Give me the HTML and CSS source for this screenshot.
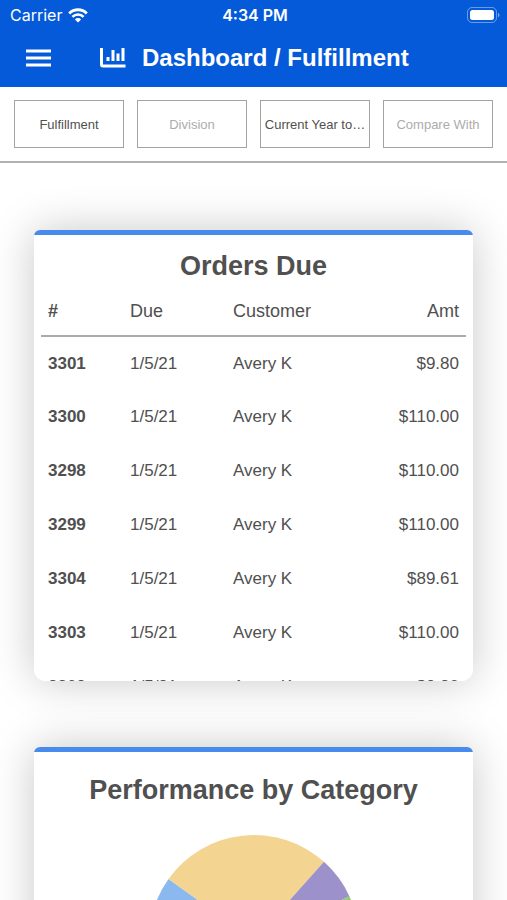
FILE: index.html
```html
<!DOCTYPE html>
<html lang="en">
<head>
<meta charset="utf-8">
<meta name="viewport" content="width=device-width, initial-scale=1">
<title>Dashboard / Fulfillment</title>
<link rel="stylesheet" href="styles.css">
</head>
<body>
<div class="app">
  <header class="header">
    <div class="status">
      <div class="status-carrier">
        <span>Carrier</span>
        <svg class="wifi" viewBox="0 0 20 15" aria-hidden="true">
          <path d="M1.2 5.4a12.4 12.4 0 0 1 17.6 0" fill="none" stroke="#fff" stroke-width="2.8"/>
          <path d="M4.4 8.8a7.9 7.9 0 0 1 11.2 0" fill="none" stroke="#fff" stroke-width="2.6"/>
          <path d="M6.9 11.4a4.4 4.4 0 0 1 6.2 0L10 14.6z" fill="#fff"/>
        </svg>
      </div>
      <span class="status-time">4:34 PM</span>
      <div class="status-battery">
        <svg class="battery" viewBox="0 0 34 16" aria-hidden="true">
          <rect x="1.500" y=".5" width="29" height="15" rx="4.5" fill="none" stroke="#fff" stroke-opacity=".4"/>
          <rect x="4" y="3" width="24" height="10" rx="2.5" fill="#fff"/>
          <path d="M32 5.800c2 .8 2 3.600 0 4.400z" fill="#fff" fill-opacity=".5"/>
        </svg>
      </div>
    </div>
    <div class="bar">
      <button class="menu" type="button" aria-label="Menu">
        <svg class="menu-icon" viewBox="0 0 25 18" aria-hidden="true">
          <path d="M0 2h25M0 9h25M0 16h25" stroke="#fff" stroke-width="3"/>
        </svg>
      </button>
      <svg class="chart-icon" viewBox="0 0 26 20" aria-hidden="true">
        <path d="M1.500 0v16.500q0 1.500 1.500 1.500h22.500" fill="none" stroke="#fff" stroke-width="3"/>
        <path d="M8 13V9M13 13V2M18 13V5.500M23 13V0" stroke="#fff" stroke-width="3"/>
      </svg>
      <h1 class="title">Dashboard / Fulfillment</h1>
    </div>
  </header>

  <nav class="filters" aria-label="Filters">
    <button class="filter" type="button">Fulfillment</button>
    <button class="filter filter-empty" type="button">Division</button>
    <button class="filter" type="button">Current Year to…</button>
    <button class="filter filter-empty" type="button">Compare With</button>
  </nav>

  <main class="content">
    <section class="card card-orders">
      <h2 class="card-title">Orders Due</h2>
      <table class="orders">
        <thead>
          <tr><th class="num" scope="col">#</th><th class="due" scope="col">Due</th><th scope="col">Customer</th><th class="amt" scope="col">Amt</th></tr>
        </thead>
        <tbody>
          <tr><td class="num">3301</td><td>1/5/21</td><td>Avery K</td><td class="amt">$9.80</td></tr>
          <tr><td class="num">3300</td><td>1/5/21</td><td>Avery K</td><td class="amt">$110.00</td></tr>
          <tr><td class="num">3298</td><td>1/5/21</td><td>Avery K</td><td class="amt">$110.00</td></tr>
          <tr><td class="num">3299</td><td>1/5/21</td><td>Avery K</td><td class="amt">$110.00</td></tr>
          <tr><td class="num">3304</td><td>1/5/21</td><td>Avery K</td><td class="amt">$89.61</td></tr>
          <tr><td class="num">3303</td><td>1/5/21</td><td>Avery K</td><td class="amt">$110.00</td></tr>
          <tr><td class="num">3302</td><td>1/5/21</td><td>Avery K</td><td class="amt">$9.80</td></tr>
        </tbody>
      </table>
    </section>

    <section class="card card-performance">
      <h2 class="card-title">Performance by Category</h2>
      <svg class="pie" viewBox="-105 -105 210 210" role="img" aria-label="Performance by category">
        <path d="M0 0L60 86.200A105 105 0 0 1-85.500-61z" fill="#8bb8ef"/>
        <path d="M0 0L-85.500-61A105 105 0 0 1 70-78.200z" fill="#f3d591"/>
        <path d="M0 0L70-78.200A105 105 0 0 1 95.500-43.600z" fill="#9c91ca"/>
        <path d="M0 0L95.500-43.600A105 105 0 0 1 60 86.200z" fill="#90cf6c"/>
      </svg>
    </section>
  </main>
</div>
</body>
</html>
```
FILE: styles.css
```css
* {
  box-sizing: border-box;
}

body {
  margin: 0;
  background: #fff;
  color: #505050;
  font-family: "Liberation Sans", Arial, sans-serif;
}

button {
  font: inherit;
  color: inherit;
}

.app {
  display: flex;
  flex-direction: column;
  height: 100vh;
  overflow: hidden;
}

.header {
  flex: none;
  background: #045ad8;
  color: #fff;
}

.status {
  display: grid;
  grid-template-columns: 1fr auto 1fr;
  align-items: center;
  height: 30px;
  padding: 0 7px 0 10px;
  font-family: Inter, "Liberation Sans", sans-serif;
  font-size: 16px;
}

.status-carrier {
  display: flex;
  align-items: center;
  gap: 6px;
}

.wifi {
  width: 20px;
  height: 15px;
}

.status-time {
  font-weight: 600;
}

.status-battery {
  display: flex;
  justify-content: flex-end;
}

.battery {
  width: 34px;
  height: 16px;
}

.bar {
  display: flex;
  align-items: center;
  height: 57px;
  padding: 0 26px 2px;
}

.menu {
  display: flex;
  margin: 0 49px 0 0;
  padding: 0;
  border: 0;
  background: none;
}

.menu-icon {
  width: 25px;
  height: 18px;
}

.chart-icon {
  width: 26px;
  height: 20px;
  margin-right: 16px;
}

.title {
  margin: 0;
  font-size: 24px;
  line-height: 28px;
  white-space: nowrap;
}

.filters {
  flex: none;
  display: grid;
  grid-template-columns: repeat(4, minmax(0, 1fr));
  gap: 13px;
  padding: 13px 14px;
  border-bottom: 2px solid #b2b2b2;
}

.filter {
  height: 48px;
  padding: 0;
  border: 1px solid #a4a4a4;
  background: #fff;
  font-size: 13px;
  overflow: hidden;
  text-overflow: ellipsis;
  white-space: nowrap;
}

.filter-empty {
  color: #acacac;
}

.content {
  flex: 1;
  min-height: 0;
  display: flex;
  flex-direction: column;
  gap: 66px;
  padding: 67px 34px;
  overflow: hidden;
}

.card {
  flex: none;
  overflow: hidden;
  border-radius: 6px 6px 12px 12px;
  background: linear-gradient(#478bec 5px, #fff 5px);
  box-shadow: 0 0 44px rgba(0, 0, 0, 0.22);
}

.card-orders {
  height: 451px;
  padding: 20px 7px 0;
}

.card-performance {
  padding: 27px 7px 40px;
}

.card-title {
  margin: 0;
  font-size: 27px;
  line-height: 32px;
  text-align: center;
}

.orders {
  width: 100%;
  border-collapse: collapse;
  table-layout: fixed;
}

.orders th {
  height: 54px;
  padding: 6px 7px 0;
  border-bottom: 2px solid #aaa;
  font-size: 18px;
  font-weight: 400;
  text-align: left;
}

.orders td {
  height: 54px;
  padding: 0 7px;
  font-size: 17px;
}

.orders .num {
  width: 82px;
  font-weight: 700;
}

.orders .due {
  width: 103px;
}

.orders .amt {
  text-align: right;
}

.pie {
  display: block;
  width: 210px;
  margin: 29px auto 0;
}
```
